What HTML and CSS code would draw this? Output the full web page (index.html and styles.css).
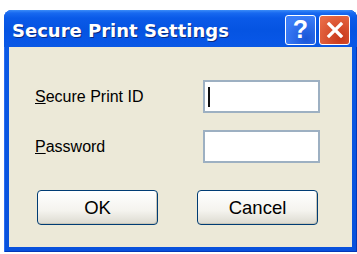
FILE: index.html
```html
<!DOCTYPE html>
<html>
<head>
<meta charset="utf-8">
<link rel="stylesheet" href="styles.css">
</head>
<body>
<div class="window">
  <div class="titlebar">
    <span class="title">Secure Print Settings</span>
    <div class="tb-buttons">
      <span class="tb-btn help">?</span>
      <span class="tb-btn close">
        <svg width="18" height="18" viewBox="0 0 18 18"><path d="M3 3 L15 15 M15 3 L3 15" stroke="#fff" stroke-width="3.2" stroke-linecap="square"/></svg>
      </span>
    </div>
  </div>
  <div class="client">
    <div class="row">
      <label class="lbl"><u>S</u>ecure Print ID</label>
      <div class="field"><span class="caret"></span></div>
    </div>
    <div class="row">
      <label class="lbl"><u>P</u>assword</label>
      <div class="field"></div>
    </div>
    <div class="actions">
      <button class="btn">OK</button>
      <button class="btn">Cancel</button>
    </div>
  </div>
</div>
</body>
</html>
```

FILE: styles.css
```css
html, body { margin: 0; padding: 0; background: #fff; }
body { padding: 10px 0 0 4px; width: 357px; height: 254px; box-sizing: border-box; overflow: hidden; }
.window {
  width: 353px;
  background: linear-gradient(#0a5ae6, #0851dc);
  border-radius: 8px 8px 0 0;
  padding: 0 5px 5px 5px;
  box-sizing: border-box;
  box-shadow: inset 1px 0 0 #2a6cf0, inset -1px 0 0 #0438b8, inset 0 -1px 0 #0438b8;
}
.titlebar {
  height: 37px;
  display: flex;
  align-items: center;
  justify-content: space-between;
  margin: 0 -5px;
  padding: 0 7px 0 8px;
  border-radius: 8px 8px 0 0;
  background: linear-gradient(#3b8cf8 0px, #1869f0 3px, #0a5ae8 8px, #0554e2 20px, #0756e6 30px, #0a58e4 37px);
}
.title {
  font-family: "DejaVu Sans", Verdana, sans-serif;
  font-weight: bold;
  font-size: 18px;
  color: #fff;
  text-shadow: 1px 1px 0 #0a2a80;
  padding-top: 3px;
}
.tb-buttons { display: flex; gap: 3px; padding-top: 2px; }
.tb-btn {
  width: 31px; height: 30px;
  box-sizing: border-box;
  border: 1px solid #fff;
  border-radius: 3px;
  display: flex; align-items: center; justify-content: center;
  color: #fff;
  font-family: "Liberation Sans", Arial, sans-serif;
  font-weight: bold;
  font-size: 25px;
}
.help { background: radial-gradient(circle at 70% 80%, #1a55d8, #3c7ef8 75%); }
.close { background: radial-gradient(circle at 70% 80%, #c8381a, #e86a45 85%); }
.client {
  background: #ece9d8;
  height: 200px;
  padding: 33px 0 0 26px;
  box-sizing: border-box;
  font-family: "Liberation Sans", Arial, sans-serif;
  color: #000;
}
.row { display: flex; align-items: center; height: 33px; margin-bottom: 17px; }
.lbl { width: 168px; font-size: 16px; }
.field {
  width: 117px; height: 33px; box-sizing: border-box;
  background: #fff; border: 2px solid #9db0c2;
  display: flex; align-items: center; padding-left: 3px;
}
.caret { width: 2px; height: 20px; background: #111; }
.actions { display: flex; gap: 39px; padding-left: 2px; margin-top: 27px; }
.btn {
  width: 121px; height: 35px;
  border: 1px solid #003c74;
  border-radius: 4px;
  background: linear-gradient(#ffffff, #f4f3ee 60%, #dcdad0);
  box-shadow: inset -1px -1px 0 #c9c6b8;
  font-family: "Liberation Sans", Arial, sans-serif;
  font-size: 18.5px;
  color: #000;
  padding: 0;
}
```
